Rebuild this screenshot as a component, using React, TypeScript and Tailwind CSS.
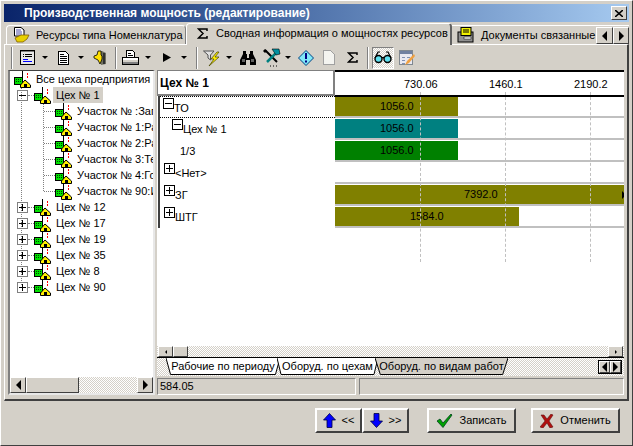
import React from 'react'

const dither = "bg-[repeating-conic-gradient(#ffffff_0_25%,#d4d0c8_0_50%)] bg-[length:2px_2px]"
const raised = "border border-t-white border-l-white border-r-[#404040] border-b-[#404040] bg-[#d4d0c8]"

function TreeIcon() {
  return (
    <svg width="17" height="17" viewBox="0 0 17 17" className="shrink-0" shapeRendering="crispEdges">
      <rect x="8" y="0" width="1" height="10" fill="#000" />
      <rect x="13" y="2" width="1" height="2" fill="#f00" />
      <rect x="13" y="5" width="1" height="2" fill="#f00" />
      <rect x="0" y="6" width="9" height="8" fill="#000" />
      <rect x="1" y="7" width="7" height="6" fill="#00e000" />
      <path d="M2 8h1M4 8h1M6 8h1M2 10h1M4 10h1M6 10h1" stroke="#004000" />
      <path d="M11 9 L16.5 14 V16.5 H6.5 V14 Z" fill="#ffee00" stroke="#000" shapeRendering="auto" />
      <rect x="10" y="13" width="3" height="4" fill="#000" />
    </svg>
  )
}

function PlusMinus(props: { open?: boolean, className?: string }) {
  return (
    <svg width="11" height="11" viewBox="0 0 11 11" className={"shrink-0 " + (props.className || "")} shapeRendering="crispEdges">
      <rect x="0.5" y="0.5" width="10" height="10" fill="#fff" stroke={props.className ? "#000" : "#808080"} />
      <rect x="2" y="5" width="7" height="1" fill="#000" />
      {!props.open && <rect x="5" y="2" width="1" height="7" fill="#000" />}
    </svg>
  )
}

function TreeRow(props: { level: number, label: string, open?: boolean, selected?: boolean }) {
  if (props.level === 0) {
    return (
      <div className="h-4 flex items-center pl-[3px] gap-[5px] whitespace-nowrap">
        <TreeIcon />
        <span>{props.label}</span>
      </div>
    )
  }
  return (
    <div className={"h-4 flex items-center " + (props.level === 1 ? "pl-[6px]" : "pl-[33px]")}>
      {props.level === 1 ? (
        <>
          <PlusMinus open={props.open} />
          <span className="w-[6px] shrink-0 border-t border-dotted border-[#808080]" />
        </>
      ) : (
        <span className="w-[11px] shrink-0 border-t border-dotted border-[#808080]" />
      )}
      <TreeIcon />
      <span className={"ml-[2px] px-[3px] whitespace-nowrap " + (props.selected ? "bg-[#d4d0c8]" : "")}>{props.label}</span>
    </div>
  )
}

function Tree() {
  return (
    <div className="relative flex-1 overflow-hidden bg-white pl-[1px]">
      <span className="absolute left-[11px] top-[17px] h-[197px] border-l border-dotted border-[#808080]" />
      <span className="absolute left-[33px] top-[33px] h-[87px] border-l border-dotted border-[#808080]" />
      <TreeRow level={0} label="Все цеха предприятия" />
      <TreeRow level={1} label="Цех № 1" open selected />
      <TreeRow level={2} label="Участок № :Зап" />
      <TreeRow level={2} label="Участок № 1:Ра" />
      <TreeRow level={2} label="Участок № 2:Ра" />
      <TreeRow level={2} label="Участок № 3:Те" />
      <TreeRow level={2} label="Участок № 4:Го" />
      <TreeRow level={2} label="Участок № 90:И" />
      <TreeRow level={1} label="Цех № 12" />
      <TreeRow level={1} label="Цех № 17" />
      <TreeRow level={1} label="Цех № 19" />
      <TreeRow level={1} label="Цех № 35" />
      <TreeRow level={1} label="Цех № 8" />
      <TreeRow level={1} label="Цех № 90" />
    </div>
  )
}

function Drop(props: { className: string }) {
  return <span className={"w-0 h-0 border-x-[3px] border-x-transparent border-t-[3px] border-t-black " + props.className} />
}

function Sep(props: { className: string }) {
  return <span className={"w-[2px] h-[22px] border-l border-[#808080] border-r-white border-r " + props.className} />
}

function Sigma(props: { className?: string }) {
  return (
    <svg width="11" height="11" viewBox="0 0 11 11" className={props.className}>
      <path d="M10 3 V1 H1.5 L6 5.5 L1.5 10 H10 V8" fill="none" stroke="#000" strokeWidth="1.5" />
    </svg>
  )
}

function Toolbar() {
  return (
    <div className="h-[25px] flex items-center shrink-0">
      <Sep className="ml-[3px]" />
      <svg width="15" height="15" viewBox="0 0 15 15" className="ml-[7px] shrink-0" shapeRendering="crispEdges">
        <rect x="0.5" y="0.5" width="14" height="14" fill="#e8e8e8" stroke="#000" />
        <rect x="1" y="1" width="13" height="1" fill="#808080" />
        <path d="M3 4h1M5 4h7M3 6h1M5 6h7" stroke="#000" />
        <rect x="3" y="9" width="5" height="1" fill="#0000ff" />
        <rect x="3" y="11" width="9" height="1" fill="#0000ff" />
      </svg>
      <Drop className="ml-[7px]" />
      <svg width="11" height="14" viewBox="0 0 11 14" className="ml-[10px] shrink-0" shapeRendering="crispEdges">
        <path d="M.5 .5 H7.5 L10.5 3.5 V13.5 H.5 Z" fill="#fff" stroke="#000" />
        <path d="M2 3H6M2 5H9M2 7H9M2 9H9M2 11H9" stroke="#000" />
      </svg>
      <Drop className="ml-[9px]" />
      <svg width="14" height="16" viewBox="0 0 14 16" className="ml-[9px] shrink-0">
        <path d="M6 1 H9 L13 3 V14 L8 15 Z" fill="#707060" />
        <path d="M5 1 H8 V5 L9 6 V9 L7 14 L5 10 L1 8 L1 6 L4 5 Z" fill="#ffe000" stroke="#000" strokeWidth=".8" />
        <rect x="10" y="3" width="2" height="11" fill="#303030" />
      </svg>
      <Sep className="ml-[8px]" />
      <svg width="17" height="15" viewBox="0 0 17 15" className="ml-[5px] shrink-0" shapeRendering="crispEdges">
        <path d="M4.5 .5 H10.5 L12.5 2.5 V7.5 H4.5 Z" fill="#fff" stroke="#000" />
        <path d="M6 3H9M6 5H11" stroke="#000" />
        <path d="M.5 7.5 H16.5 V14.5 H.5 Z" fill="#d4d0c8" stroke="#000" />
        <rect x="1" y="8" width="15" height="2" fill="#fff" />
        <rect x="1" y="12" width="15" height="2" fill="#808080" />
      </svg>
      <Drop className="ml-[6px]" />
      <svg width="8" height="9" viewBox="0 0 8 9" className="ml-[12px] shrink-0">
        <path d="M0 0 L8 4.5 L0 9 Z" fill="#000" />
      </svg>
      <Drop className="ml-[10px]" />
      <Sep className="ml-[9px]" />
      <svg width="18" height="18" viewBox="0 0 18 18" className="ml-[5px] shrink-0">
        <path d="M.5 2 H11 L7.5 6 V11 L5 9 V6 Z" fill="#e0e0e0" stroke="#505050" />
        <path d="M14 3 L8 10 H11 L6 17 L16 8 H12 L16 3 Z" fill="#ffee00" stroke="#404000" strokeWidth=".7" />
      </svg>
      <Drop className="ml-[5px]" />
      <svg width="16" height="14" viewBox="0 0 16 14" className="ml-[8px] shrink-0">
        <path d="M3 0 H6 V3 H7 V7 H9 V3 H10 V0 H13 V3 L16 9 V14 H10 V9 H6 V14 H0 V9 L3 3 Z" fill="#000" />
        <rect x="2" y="8" width="3" height="3" fill="#606060" />
        <rect x="11" y="8" width="3" height="3" fill="#606060" />
      </svg>
      <svg width="19" height="19" viewBox="0 0 19 19" className="ml-[6px] shrink-0">
        <path d="M3 2 L15 14" stroke="#000" strokeWidth="2" />
        <path d="M1 3 L3 1 L5 3 L3 5 Z" fill="#000" />
        <path d="M15 4 L5 14" stroke="#008080" strokeWidth="2.5" />
        <path d="M10 1 H17 L18 6 L14 7 Z" fill="#0090a0" stroke="#000" strokeWidth=".6" />
        <path d="M8 18H9M11 18H12M14 18H15" stroke="#000" />
      </svg>
      <Drop className="ml-[4px]" />
      <svg width="16" height="16" viewBox="0 0 16 16" className="ml-[7px] shrink-0">
        <path d="M8 .5 L15.5 8 L8 15.5 L.5 8 Z" fill="#80e8f8" stroke="#004080" strokeWidth="1" />
        <rect x="7" y="3" width="2" height="6" fill="#000080" />
        <rect x="7" y="10.5" width="2" height="2" fill="#000080" />
      </svg>
      <svg width="12" height="15" viewBox="0 0 12 15" className="ml-[9px] shrink-0" shapeRendering="crispEdges">
        <path d="M.5 .5 H7.5 L11.5 4.5 V14.5 H.5 Z" fill="#f4f4f0" stroke="#a0a0a0" />
      </svg>
      <Sigma className="ml-[12px] shrink-0" />
      <Sep className="ml-[9px]" />
      <span className={"ml-[3px] w-[22px] h-[22px] flex items-center justify-center border border-t-[#808080] border-l-[#808080] border-r-white border-b-white " + dither}>
        <svg width="18" height="13" viewBox="0 0 18 13">
          <circle cx="4.5" cy="8" r="3.5" fill="#60e0f0" stroke="#000" strokeWidth="1.4" />
          <circle cx="13.5" cy="8" r="3.5" fill="#60e0f0" stroke="#000" strokeWidth="1.4" />
          <path d="M8 7 Q9 6 10 7 M1 7 L4 1 H6 M17 7 L14 1 H12" fill="none" stroke="#000" strokeWidth="1.2" />
        </svg>
      </span>
      <svg width="16" height="16" viewBox="0 0 16 16" className="ml-[5px] shrink-0" shapeRendering="crispEdges">
        <rect x=".5" y=".5" width="13" height="14" fill="#e8e8f0" stroke="#808890" />
        <rect x="1" y="1" width="12" height="3" fill="#7080a0" />
        <path d="M3 7H6M8 7H11M3 10H6M3 13H6" stroke="#8090b0" />
        <path d="M15 4 L8 11 L6 15 L10 13 L16 6 Z" fill="#f0a040" shapeRendering="auto" />
      </svg>
    </div>
  )
}

const rows = [
  { label: "ТО", indent: "pl-[3px]", box: "minus", bar: "w-[123px] bg-[#808000]", value: "1056.0", text: "ml-[45px]" },
  { label: "Цех № 1", indent: "pl-[12px]", box: "minus", bar: "w-[123px] bg-[#008080]", value: "1056.0", text: "ml-[45px]" },
  { label: "1/3", indent: "pl-[20px]", box: "", bar: "w-[123px] bg-[#008000]", value: "1056.0", text: "ml-[45px]" },
  { label: "<Нет>", indent: "pl-[4px]", box: "plus", bar: "", value: "", text: "" },
  { label: "ЗГ", indent: "pl-[4px]", box: "plus", bar: "w-full bg-[#808000]", value: "7392.0", text: "ml-[129px]" },
  { label: "ШТГ", indent: "pl-[4px]", box: "plus", bar: "w-[184px] bg-[#808000]", value: "1584.0", text: "ml-[75px]" },
]

function Chart() {
  return (
    <div className="relative flex-1 bg-white overflow-hidden text-[11px]">
      <div className="h-[26px] flex border-t-2 border-black">
        <div className="w-[178px] -mt-[2px] border border-[#808080] border-r-2 border-b-2 bg-white flex items-center pl-[2px] font-bold text-[12px] shrink-0">Цех № 1</div>
        <div className="flex-1 border-b-2 border-black flex pt-[4px] -mb-[1px]">
          <span className="ml-[69px] w-[36px]">730.06</span>
          <span className="ml-[49px] w-[36px]">1460.1</span>
          <span className="ml-[49px] w-[36px]">2190.2</span>
        </div>
      </div>
      <div className="border-l-2 border-[#404040] ml-[1px] w-fit">
        {rows.map((r, i) => (
          <div key={r.label} className="flex h-[22px]">
            <div className={"w-[175px] flex relative shrink-0 " + r.indent + (i === 0 ? " border-y border-dotted border-black" : "")}>
              {r.box !== "" && <PlusMinus open={r.box === "minus"} className="mt-[1px]" />}
              <span className="mt-[3px] whitespace-nowrap">{r.label}</span>
            </div>
            <div className="w-[291px] border-b-2 border-[#c0c0c0] pt-[1px]">
              {r.bar !== "" && (
                <div className={"h-[19px] flex items-center relative " + r.bar}>
                  <span className={r.text}>{r.value}</span>
                  {r.label === "ЗГ" && <span className="absolute right-0 top-[6px] w-0 h-0 border-y-[4px] border-y-transparent border-r-0 border-l-[4px] border-l-black" />}
                </div>
              )}
            </div>
          </div>
        ))}
      </div>
      <span className="absolute left-[263px] top-[22px] h-[170px] border-l border-dashed border-[#c0c0c0]" />
      <span className="absolute left-[348px] top-[22px] h-[170px] border-l border-dashed border-[#c0c0c0]" />
      <span className="absolute left-[433px] top-[22px] h-[170px] border-l border-dashed border-[#c0c0c0]" />
    </div>
  )
}

function SheetTab(props: { label: string, width: string, active?: boolean }) {
  return (
    <div className={"relative h-[17px] flex items-center justify-center -mr-[3px] " + props.width}>
      <svg className="absolute inset-0 w-full h-full" viewBox="0 0 100 17" preserveAspectRatio="none">
        <path d="M0 0 L4 16.5 H96 L100 0" fill={props.active ? "#fff" : "#d4d0c8"} stroke="#000" vectorEffect="non-scaling-stroke" />
      </svg>
      <span className="relative whitespace-nowrap">{props.label}</span>
    </div>
  )
}

function Arrow(props: { up?: boolean }) {
  return (
    <svg width="13" height="15" viewBox="0 0 13 15" className={props.up ? "" : "rotate-180"}>
      <path d="M6.5 0.5 L12.5 7 H9 V14.5 H4 V7 H.5 Z" fill="#0000ff" stroke="#000040" strokeWidth=".8" />
    </svg>
  )
}

function ScrollBtn(props: { dir: "l" | "r", className?: string }) {
  return (
    <span className={"flex items-center justify-center " + raised + " " + (props.className || "")}>
      <span className={"w-0 h-0 border-y-[5px] border-y-transparent " + (props.dir === "l" ? "border-r-[5px] border-r-black" : "border-l-[5px] border-l-black")} />
    </span>
  )
}

const footerBtn = "h-[25px] flex items-center justify-center gap-[6px] border-2 border-t-white border-l-white border-r-[#404040] border-b-[#404040]"

export default function App() {
  return (
    <div className="w-[633px] h-[446px] bg-[#d4d0c8] flex flex-col overflow-hidden border border-t-white border-l-white border-r-[#404040] border-b-[#404040] pt-[3px] px-[3px] pb-[1px] font-['Liberation_Sans',sans-serif] text-[11px] text-black">
      <div className="h-[18px] shrink-0 bg-gradient-to-r from-[#0a246a] to-[#a6caf0] flex items-center pl-[20px] pr-[2px] justify-between">
        <span className="text-white font-bold text-[12px]">Производственная мощность (редактирование)</span>
        <span className={"w-4 h-[14px] flex items-center justify-center " + raised}>
          <svg width="8" height="7" viewBox="0 0 8 7"><path d="M0 0 L8 7 M8 0 L0 7" stroke="#000" strokeWidth="1.6" /></svg>
        </span>
      </div>

      <div className="h-[22px] flex items-end shrink-0 relative z-10 pl-[2px]">
        <div className="h-[19px] w-[180px] flex items-center gap-[6px] pl-[6px] border-t border-l border-white rounded-t-sm shrink-0 border-r border-r-[#808080]">
          <svg width="17" height="16" viewBox="0 0 17 16">
            <path d="M1.5 .5 H8 L11 3 V9 H1.5 Z" fill="#fff" stroke="#000" />
            <path d="M3 3H8M3 5H9M3 7H9" stroke="#000080" strokeWidth=".7" />
            <path d="M4 15 L2 11 L8 8 H16 L14 12 L10 15 Z" fill="#e8d000" stroke="#806000" strokeWidth=".8" />
          </svg>
          <span className="whitespace-nowrap">Ресурсы типа Номенклатура</span>
        </div>
        <div className="h-[22px] w-[266px] flex items-center pl-[10px] pb-[2px] border-t border-l border-white border-r-2 border-r-[#606060] rounded-t-sm bg-[#d4d0c8] -mb-[1px] shrink-0">
          <Sigma className="mr-[8px]" />
          <span className="whitespace-nowrap">Сводная информация о мощностях ресурсов</span>
        </div>
        <div className="h-[19px] flex-1 flex items-center gap-[7px] pl-[5px] border-t border-white overflow-hidden relative">
          <svg width="17" height="16" viewBox="0 0 17 16" className="shrink-0">
            <rect x="1" y="5" width="15" height="10" fill="#909090" stroke="#000" />
            <rect x="4" y="0.5" width="10" height="8" fill="#f0f000" stroke="#000" />
            <path d="M6 3H12M6 5H12" stroke="#000" />
            <rect x="7" y="10" width="7" height="2" fill="#fff" stroke="#000" strokeWidth=".5" />
          </svg>
          <span className="whitespace-nowrap">Документы связанные</span>
          <div className="absolute right-[0px] top-[1px] flex">
            <ScrollBtn dir="l" className="w-[17px] h-[17px]" />
            <ScrollBtn dir="r" className="w-[16px] h-[17px]" />
          </div>
        </div>
      </div>

      <div className="h-[357px] shrink-0 border-t border-l border-white border-r-2 border-b-2 border-r-[#404040] border-b-[#404040] flex flex-col px-[3px]">
        <Toolbar />
        <div className="flex-1 flex gap-[2px] min-h-0 pb-[4px]">
          <div className="w-[147px] flex flex-col border-2 border-t border-t-[#404040] border-l-[#808080] border-r-[#e8e8e8] border-b-[#e8e8e8]">
            <Tree />
            <div className="h-[16px] flex shrink-0">
              <ScrollBtn dir="l" className="w-[16px] h-[16px]" />
              <span className={"w-[53px] h-[16px] " + raised} />
              <span className={"flex-1 " + dither} />
              <ScrollBtn dir="r" className="w-[16px] h-[16px]" />
            </div>
          </div>
          <div className="flex-1 flex flex-col min-w-0">
            <Chart />
            <div className={"h-[11px] flex shrink-0 " + dither}>
              <span className={"w-[15px] h-[11px] ml-[1px] flex items-center justify-center " + raised}><span className="w-0 h-0 border-y-[2px] border-y-transparent border-r-[2px] border-r-black" /></span>
              <span className={"w-[15px] h-[11px] " + raised} />
              <span className="flex-1" />
              <span className={"w-[15px] h-[11px] mr-[1px] flex items-center justify-center " + raised}><span className="w-0 h-0 border-y-[2px] border-y-transparent border-l-[2px] border-l-black" /></span>
            </div>
            <div className={"h-[19px] flex shrink-0 border-t border-black pl-[9px] items-start " + dither}>
              <SheetTab label="Рабочие по периоду" width="w-[114px]" active />
              <SheetTab label="Оборуд. по цехам" width="w-[101px]" active />
              <SheetTab label="Оборуд. по видам работ" width="w-[133px]" />
              <span className="flex-1" />
              <div className="flex border border-black mr-[2px] mt-[2px]">
                <ScrollBtn dir="l" className="w-[11px] h-[12px]" />
                <ScrollBtn dir="r" className="w-[11px] h-[12px]" />
              </div>
            </div>
            <div className="h-[19px] flex gap-[3px] shrink-0 pt-[2px]">
              <div className="w-[199px] border border-t-[#808080] border-l-[#808080] border-r-white border-b-white pl-[2px] flex items-center">584.05</div>
              <div className="flex-1 border border-t-[#808080] border-l-[#808080] border-r-white border-b-white" />
            </div>
          </div>
        </div>
      </div>

      <div className="flex-1 flex pt-[7px] pl-[311px] items-start">
        <button className={"w-[47px] " + footerBtn}>
          <Arrow up />
          <span>&lt;&lt;</span>
        </button>
        <button className={"w-[47px] " + footerBtn}>
          <Arrow />
          <span>&gt;&gt;</span>
        </button>
        <button className={"ml-[18px] w-[89px] " + footerBtn}>
          <svg width="17" height="15" viewBox="0 0 17 15"><path d="M1 8 L4 6 L7 10 L15 1 L16 2 L7 14.5 Z" fill="#00a000" stroke="#004020" strokeWidth=".8" /></svg>
          <span>Записать</span>
        </button>
        <button className={"ml-[15px] w-[89px] " + footerBtn}>
          <svg width="14" height="14" viewBox="0 0 14 14"><path d="M1 1 H4 L7 5 L11 0 L13 1 L9 7 L13 13 L10 14 L7 9 L3 14 L0 13 L5 7 Z" fill="#b01010" stroke="#601010" strokeWidth=".6" /></svg>
          <span>Отменить</span>
        </button>
      </div>
    </div>
  )
}
